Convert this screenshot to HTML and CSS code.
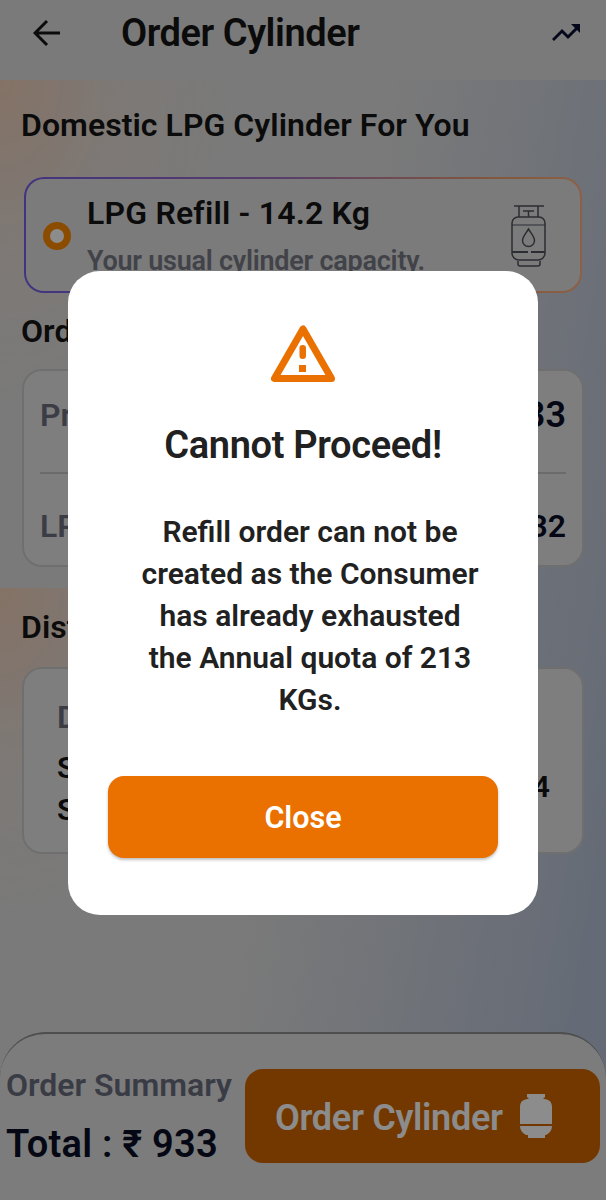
FILE: index.html
```html
<!DOCTYPE html>
<html lang="en">
<head>
<meta charset="utf-8">
<title>Order Cylinder</title>
<link rel="stylesheet" href="styles.css">
</head>
<body>
<div class="page">
  <header class="topbar">
    <svg class="back" viewBox="0 0 28 28" width="28" height="28"><path d="M27 14H2M14 2 2 14l12 12" fill="none" stroke="#141414" stroke-width="3"/></svg>
    <h1 class="title">Order Cylinder</h1>
    <svg class="trend" viewBox="0 0 28 18" width="28" height="18"><path d="M1 16l9-9 6 6 9-9" fill="none" stroke="#0a1030" stroke-width="3"/><path d="M19 0h9v9z" fill="#0a1030"/></svg>
  </header>
  <main class="content">
    <h2 class="heading">Domestic LPG Cylinder For You</h2>
    <section class="refill">
      <span class="radio"></span>
      <div class="refill-text">
        <div class="refill-name">LPG Refill - 14.2 Kg</div>
        <div class="refill-sub">Your usual cylinder capacity.</div>
      </div>
      <svg class="cyl" viewBox="0 0 38 64" width="38" height="64" fill="none" stroke="#50525c" stroke-width="1.500">
        <path d="M5 3h30M10 3v11M29 3v11M14 8h11M19.500 8v6"/>
        <path d="M9 14h21a6 6 0 0 1 6 6v30a7 7 0 0 1-7 7H10a7 7 0 0 1-7-7V20a6 6 0 0 1 6-6z"/>
        <path d="M3 22h33" stroke-width="1"/>
        <path d="M3 49h16M22 49h14" stroke-width="2"/>
        <path d="M9 58v3a2 2 0 0 0 2 2h18a2 2 0 0 0 2-2v-3"/>
        <path d="M19.500 26c-3 5-6 8-6 11.500a6 6 0 0 0 12 0c0-3.500-3-6.500-6-11.500z"/>
      </svg>
    </section>
    <h2 class="heading heading-order">Order Details</h2>
    <section class="panel panel-order">
      <div class="row row-first"><span class="label">Price</span><span class="amount">₹ 933</span></div>
      <div class="row row-second"><span class="label">LPG</span><span class="amount amount-small">₹ 932</span></div>
    </section>
    <h2 class="heading heading-dist">Dist.</h2>
    <section class="panel panel-dist">
      <div class="dist-text">
        <div class="label dist-name">Dist.</div>
        <div class="dist-lines">
          <div class="dist-line">Shop</div>
          <div class="dist-line">Street</div>
        </div>
      </div>
      <span class="dist-num">4</span>
    </section>
  </main>
  <footer class="summary">
    <div class="sum-text">
      <div class="sum-label">Order Summary</div>
      <div class="sum-total">Total : ₹ 933</div>
    </div>
    <div class="order-btn">
      <span>Order Cylinder</span>
      <svg viewBox="0 0 32 44" width="32" height="44"><path d="M7 0h18v3l-2 2c5 0 9 2 9 8v17H0V13c0-6 4-8 9-8L7 3z" fill="#fff"/><path d="M0 32h32c0 4-2 7-6 9h-1v3H8v-3H6c-4-2-6-5-6-9z" fill="#fff"/></svg>
    </div>
  </footer>
</div>
<div class="scrim"></div>
<div class="modal">
  <svg class="warn" viewBox="0 0 64 57" width="64" height="57"><path d="M32 4 3.500 53.500h57z" fill="none" stroke="#ea7000" stroke-width="7" stroke-linejoin="round"/><rect x="28.500" y="20" width="6.500" height="14" rx="3.200" fill="#ea7000"/><rect x="28" y="40" width="7" height="7" fill="#ea7000"/></svg>
  <h2 class="modal-title">Cannot Proceed!</h2>
  <p class="modal-body">Refill order can not be created as the Consumer has already exhausted the Annual quota of 213 KGs.</p>
  <div class="close-btn">Close</div>
</div>
</body>
</html>
```
FILE: styles.css
```css
* { box-sizing: border-box; }
html, body { margin: 0; padding: 0; }
body { font-family: Roboto, "Noto Sans", sans-serif; height: 1200px; overflow: hidden; position: relative; }
h1, h2, p { margin: 0; }

.page {
  height: 1200px;
  display: flex;
  flex-direction: column;
  background-color: #dedede;
  background-image:
    radial-gradient(ellipse 230px 330px at 0 0, rgba(250, 200, 165, .65) 0, rgba(245, 215, 195, .3) 50%, rgba(222, 222, 222, 0) 100%),
    linear-gradient(100deg, rgba(185, 196, 216, 0) 50%, rgba(185, 196, 216, 1) 92%);
  background-size: 606px 508px, 606px 100%;
  background-position: 0 80px, 0 0;
  background-repeat: repeat-y, no-repeat;
}

.topbar { height: 80px; flex: none; display: flex; align-items: center; background: #dedede; padding: 0 26px 0 33px; }
.back { margin-top: -14px; flex: none; }
.title { font-size: 38px; font-weight: 600; line-height: 40px; color: #141414; margin: -15px 0 0 60px; flex: 1; letter-spacing: -.45px; }
.trend { margin-top: -14px; flex: none; }

.content { flex: 1; padding: 0 22px; }
.heading { font-size: 32px; font-weight: 600; line-height: 36px; color: #141414; letter-spacing: .05px; margin-left: -1px; }
.content > .heading:first-child { margin-top: 27px; }

.refill {
  height: 116px;
  margin: 34px 2px 0 2px;
  border: 2.500px solid transparent;
  border-radius: 20px;
  background:
    linear-gradient(#e0e0e0, #e0e0e0) padding-box,
    linear-gradient(90deg, #7a5fe8 0, #a070c0 45%, #f0a070 85%, #ffb080 100%) border-box;
  display: flex;
  align-items: center;
  padding: 0 33px 0 17px;
}
.radio { flex: none; width: 28px; height: 28px; border-radius: 50%; border: 7px solid #ff8a00; background: #fff; margin-top: 2px; }
.refill-text { flex: 1; margin-left: 16px; }
.refill-name { font-size: 32px; font-weight: 600; line-height: 36px; color: #141414; letter-spacing: .2px; margin-top: 1px; }
.refill-sub { font-size: 27px; font-weight: 600; line-height: 32px; color: #777a85; margin-top: 14px; letter-spacing: -.25px; white-space: nowrap; }
.cyl { flex: none; }

.heading-order { margin-top: 20px; }
.panel { background: #e6e6e6; border: 2px solid #cbcbcb; border-radius: 20px; }
.panel-order { height: 198px; margin-top: 20px; padding: 0 16px; display: flex; flex-direction: column; }
.row { display: flex; justify-content: space-between; align-items: center; }
.row-first { height: 103px; border-bottom: 2px solid #c4c4c4; padding-bottom: 14px; }
.row-second { height: 91px; padding-top: 12px; }
.label { font-size: 32px; font-weight: 600; color: #6e707c; }
.amount { font-size: 36px; font-weight: 600; color: #0a0f25; }
.amount-small { font-size: 32px; }
.heading-dist { margin-top: 42px; }
.panel-dist { height: 187px; margin-top: 22px; padding: 30px 32px 0 33px; display: flex; justify-content: space-between; }
.dist-name { line-height: 36px; }
.dist-lines { margin-top: 12px; }
.dist-line { font-size: 30px; font-weight: 600; line-height: 42px; color: #141414; }
.dist-num { font-size: 30px; font-weight: 600; color: #141414; margin-top: 70px; }

.summary {
  height: 168px;
  flex: none;
  background: #e2e2e2;
  border-top: 2px solid #8f8f8f;
  border-radius: 46px 46px 0 0;
  display: flex;
  align-items: flex-start;
  padding: 34px 6px 0 6px;
}
.sum-text { flex: 1; }
.sum-label { font-size: 32px; font-weight: 600; line-height: 34px; color: #6b6e7e; letter-spacing: 0; white-space: nowrap; }
.sum-total { font-size: 38px; font-weight: 600; line-height: 40px; color: #0a0f25; margin-top: 22px; letter-spacing: .25px; white-space: nowrap; }
.order-btn {
  width: 355px;
  height: 94px;
  flex: none;
  margin-top: 1px;
  background: #d16600;
  border-radius: 18px;
  display: flex;
  align-items: center;
  padding-left: 30px;
  gap: 17px;
  color: #fff;
  font-size: 36px;
  font-weight: 600;
  letter-spacing: -.3px;
}
.order-btn span { margin-top: 3px; }

.scrim { position: absolute; inset: 0; background: rgba(0, 0, 0, .45); z-index: 1; }

.modal {
  position: absolute;
  z-index: 3;
  left: 68px;
  top: 271px;
  width: 470px;
  height: 644px;
  background: #fff;
  border-radius: 32px;
  padding: 54px 40px 57px;
  display: flex;
  flex-direction: column;
  align-items: center;
}
.warn { flex: none; }
.modal-title { font-size: 38px; font-weight: 600; line-height: 40px; color: #212121; margin-top: 43px; letter-spacing: -.35px; }
.modal-body { font-size: 30px; font-weight: 600; line-height: 42px; color: #212121; text-align: center; margin: 46px 0 0 14px; width: 345px; letter-spacing: 0; }
.close-btn {
  width: 100%;
  height: 82px;
  margin-top: 55px;
  background: #ea7000;
  border-radius: 16px;
  box-shadow: 0 2px 3px rgba(0, 0, 0, .25);
  color: #fff;
  font-size: 30.500px;
  font-weight: 600;
  line-height: 84px;
  text-align: center;
}
```
